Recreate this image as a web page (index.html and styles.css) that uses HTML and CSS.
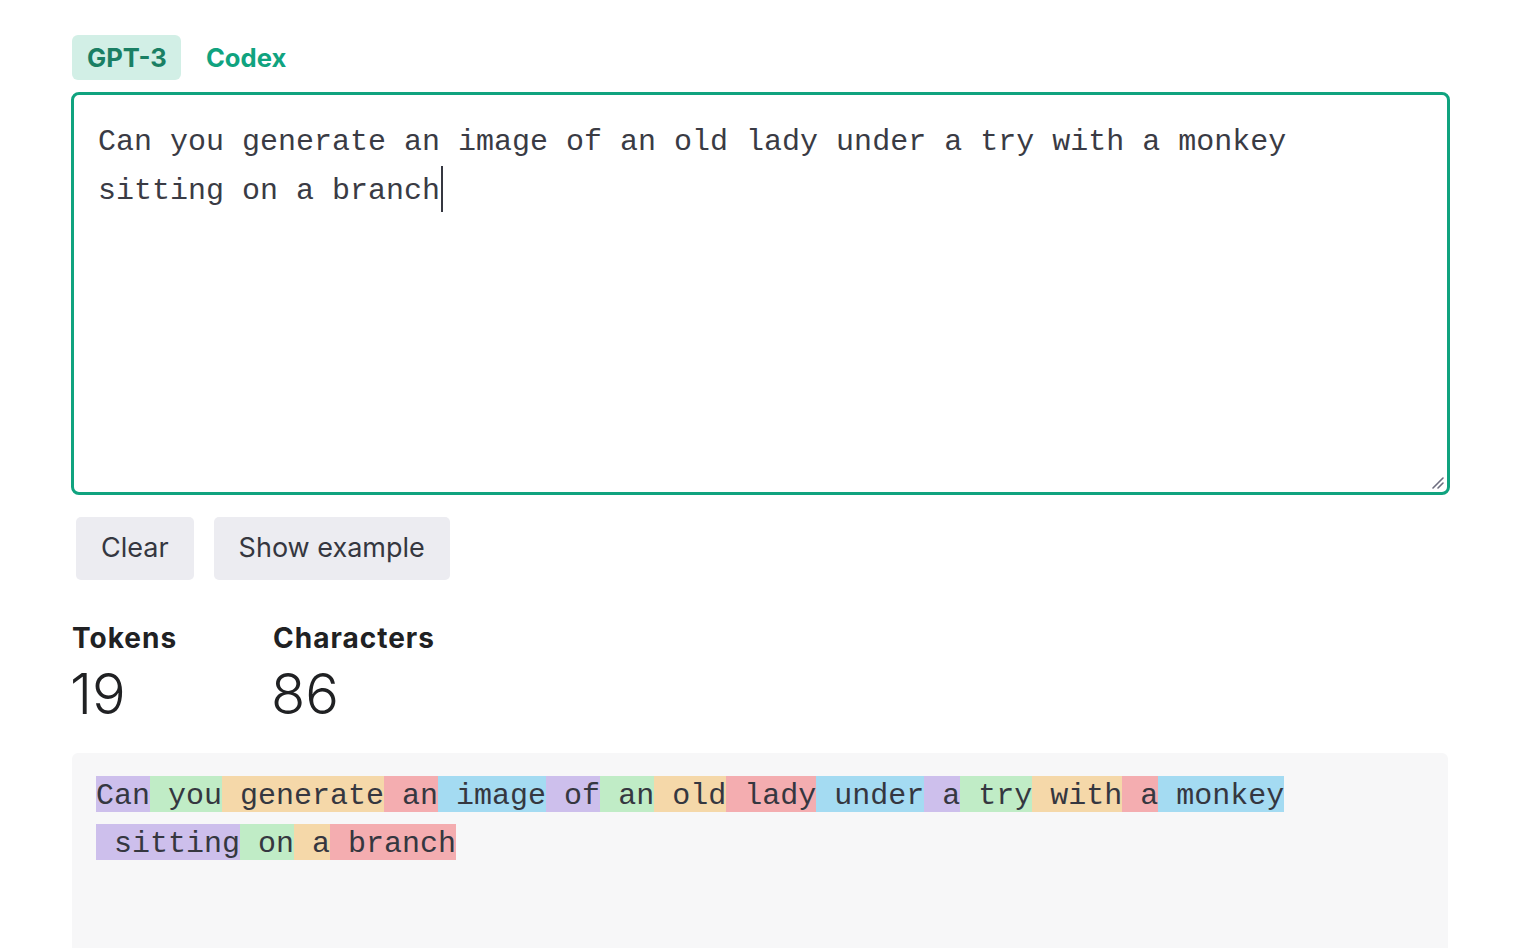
FILE: index.html
```html
<!DOCTYPE html>
<html lang="en">
<head>
<meta charset="utf-8">
<title>Tokenizer</title>
<link rel="stylesheet" href="styles.css">
</head>
<body>
<main class="page">
  <div class="tabs">
    <span class="tab tab-active">GPT-3</span>
    <span class="tab">Codex</span>
  </div>

  <div class="editor">
    <p class="editor-text">Can you generate an image of an old lady under a try with a monkey sitting on a branch<span class="caret"></span></p>
    <svg class="grip" width="14" height="14" viewBox="0 0 14 14"><path d="M13 3 L3 13 M13 8 L8 13" stroke="#6e6e80" stroke-width="1.6" stroke-linecap="round"/></svg>
  </div>

  <div class="actions">
    <button class="btn">Clear</button>
    <button class="btn">Show example</button>
  </div>

  <div class="stats">
    <div class="stat">
      <div class="stat-label">Tokens</div>
      <div class="stat-value">19</div>
    </div>
    <div class="stat">
      <div class="stat-label">Characters</div>
      <div class="stat-value">86</div>
    </div>
  </div>

  <div class="tokens">
    <span class="tok c1">Can</span><span class="tok c2"> you</span><span class="tok c3"> generate</span><span class="tok c4"> an</span><span class="tok c5"> image</span><span class="tok c1"> of</span><span class="tok c2"> an</span><span class="tok c3"> old</span><span class="tok c4"> lady</span><span class="tok c5"> under</span><span class="tok c1"> a</span><span class="tok c2"> try</span><span class="tok c3"> with</span><span class="tok c4"> a</span><span class="tok c5"> monkey</span><span class="tok c1"> sitting</span><span class="tok c2"> on</span><span class="tok c3"> a</span><span class="tok c4"> branch</span>
  </div>
</main>
</body>
</html>
```

FILE: styles.css
```css
* { box-sizing: border-box; }

html, body {
  margin: 0;
  padding: 0;
  background: #ffffff;
  height: 100%;
  overflow: hidden;
}

body {
  font-family: "Inter", "Liberation Sans", sans-serif;
  color: #353740;
}

.page {
  width: 1379px;
  margin-left: 71px;
  padding-top: 35px;
  display: flex;
  flex-direction: column;
}

.tabs {
  display: flex;
  height: 45px;
  align-items: stretch;
  margin-left: 1px;
}

.tab {
  display: flex;
  align-items: center;
  padding: 0 14px 0 15px;
  font-size: 25.6px;
  font-weight: 700;
  color: #10a37f;
  border-radius: 6px;
}

.tab + .tab { margin-left: 10px; }

.tab-active {
  background: #d2efe6;
  color: #1a7f64;
}

.editor {
  position: relative;
  margin-top: 12px;
  height: 403px;
  border: 3px solid #10a37f;
  border-radius: 8px;
  padding: 23px 24px;
}

.editor-text {
  margin: 0;
  font-family: "Liberation Mono", "DejaVu Sans Mono", monospace;
  font-size: 30px;
  line-height: 48px;
  color: #3a3b44;
}

.caret {
  display: inline-block;
  width: 2px;
  height: 46px;
  background: #353740;
  vertical-align: -13px;
  margin-left: 1px;
}

.grip {
  position: absolute;
  right: 3px;
  bottom: 3px;
}

.actions {
  display: flex;
  gap: 20px;
  margin-top: 22px;
  margin-left: 5px;
}

.btn {
  font-family: "Inter", "Liberation Sans", sans-serif;
  font-size: 27px;
  color: #353740;
  background: #ececf1;
  border: none;
  border-radius: 5px;
  height: 63px;
  padding: 0 25px 3px;
  letter-spacing: 0;
}

.stats {
  display: flex;
  margin-top: 40px;
  margin-left: 1px;
}

.stat { width: 201px; }

.stat-label {
  font-size: 28px;
  font-weight: 700;
  color: #202123;
  line-height: 36px;
  letter-spacing: 1px;
}

.stat-value {
  font-size: 56px;
  font-weight: 300;
  color: #202123;
  line-height: 64px;
  margin-top: 6px;
  margin-left: -2px;
}

.tokens {
  margin-top: 27px;
  margin-left: 1px;
  width: 1376px;
  min-height: 300px;
  background: #f7f7f8;
  border-radius: 6px;
  padding: 23px 24px;
  display: flex;
  flex-wrap: wrap;
  align-content: flex-start;
  row-gap: 12px;
}

.tok {
  white-space: pre;
  font-family: "Liberation Mono", "DejaVu Sans Mono", monospace;
  font-size: 30px;
  height: 36px;
  line-height: 40px;
  color: #353740;
}

.c1 { background: #cdbfec; }
.c2 { background: #c0ecc6; }
.c3 { background: #f5d8a9; }
.c4 { background: #f4adb0; }
.c5 { background: #a4dbf2; }
```
